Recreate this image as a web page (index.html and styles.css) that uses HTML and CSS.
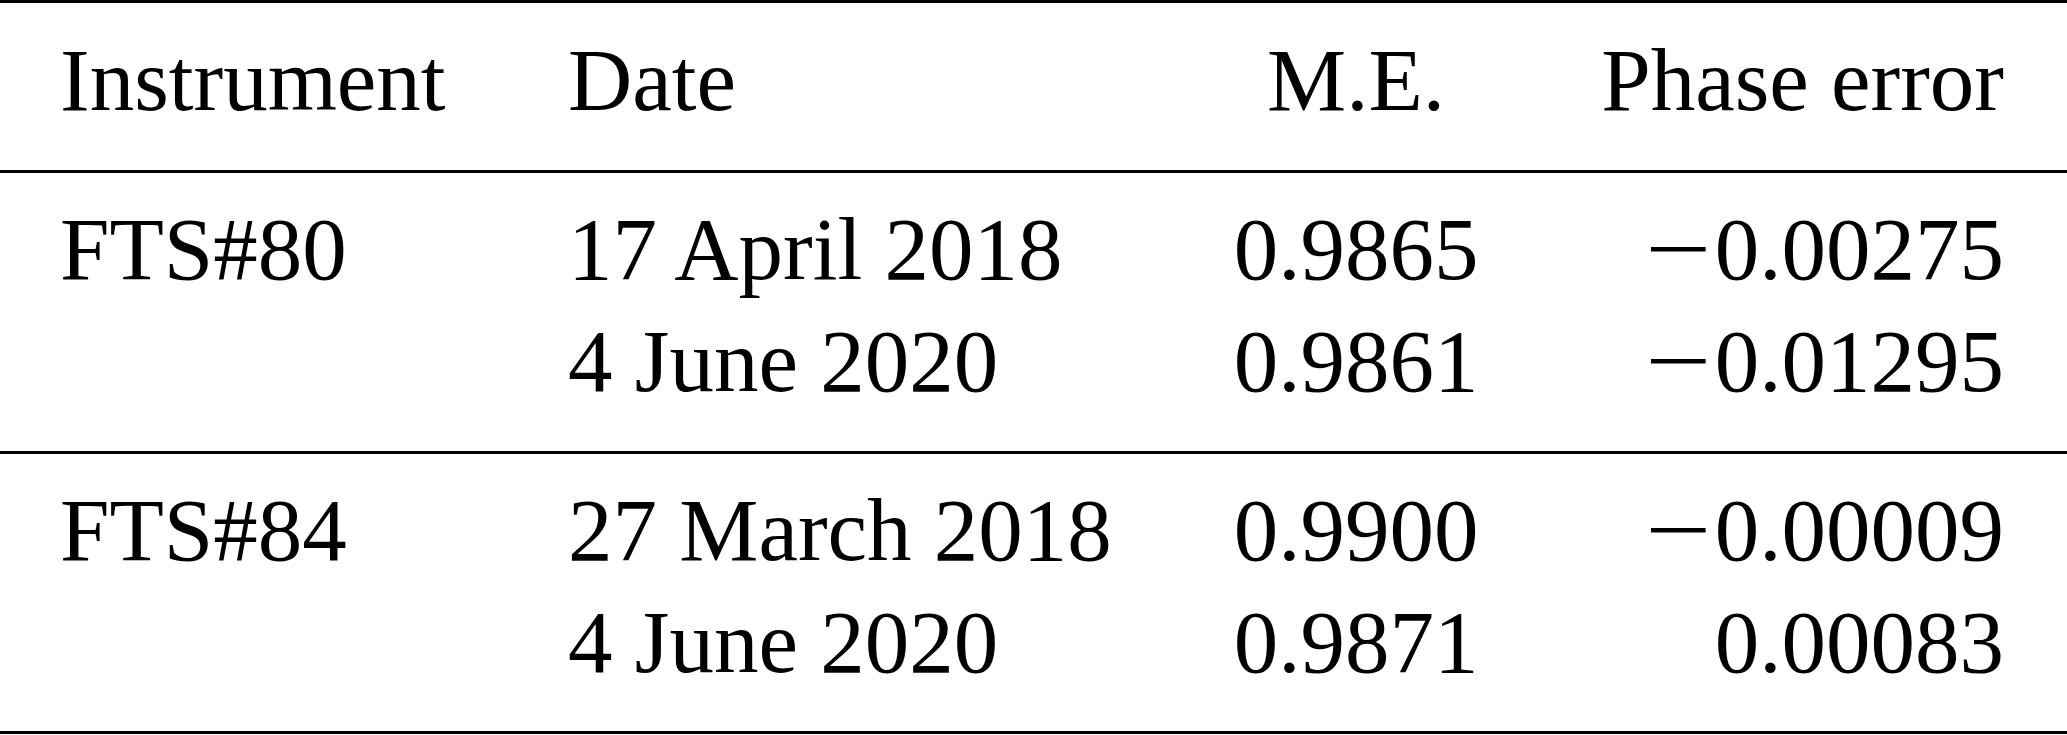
FILE: index.html
```html
<!DOCTYPE html>
<html>
<head>
<meta charset="utf-8">
<link rel="stylesheet" href="styles.css">
</head>
<body>
<table class="tbl">
  <colgroup>
    <col class="c1"><col class="c2"><col class="c3"><col class="c4">
  </colgroup>
  <thead>
    <tr>
      <th class="inst">Instrument</th>
      <th class="date">Date</th>
      <th class="me">M.E.</th>
      <th class="ph">Phase error</th>
    </tr>
  </thead>
  <tbody>
    <tr class="first">
      <td class="inst">FTS#80</td>
      <td class="date">17 April 2018</td>
      <td class="me">0.9865</td>
      <td class="ph"><span class="minus">−</span>0.00275</td>
    </tr>
    <tr class="last">
      <td class="inst"></td>
      <td class="date">4 June 2020</td>
      <td class="me">0.9861</td>
      <td class="ph"><span class="minus">−</span>0.01295</td>
    </tr>
  </tbody>
  <tbody>
    <tr class="first">
      <td class="inst">FTS#84</td>
      <td class="date">27 March 2018</td>
      <td class="me">0.9900</td>
      <td class="ph"><span class="minus">−</span>0.00009</td>
    </tr>
    <tr class="last end">
      <td class="inst"></td>
      <td class="date">4 June 2020</td>
      <td class="me">0.9871</td>
      <td class="ph">0.00083</td>
    </tr>
  </tbody>
</table>
</body>
</html>
```

FILE: styles.css
```css
html, body {
  margin: 0;
  padding: 0;
  background: #ffffff;
}

.tbl {
  width: 2067px;
  table-layout: fixed;
  border-collapse: separate;
  border-spacing: 0;
  font-family: "Liberation Serif", "Times New Roman", serif;
  font-size: 89px;
  line-height: 112px;
  color: #000;
}

.c1 { width: 568px; }
.c2 { width: 602px; }
.c3 { width: 372px; }
.c4 { width: 525px; }

.tbl th,
.tbl td {
  padding: 0;
  font-weight: normal;
  white-space: nowrap;
  vertical-align: baseline;
}

.tbl th {
  border-top: 3px solid #000;
  border-bottom: 3px solid #000;
  padding-top: 21px;
  padding-bottom: 34px;
}

.tbl tr.first td { padding-top: 20px; }
.tbl tr.last td {
  padding-bottom: 34px;
  border-bottom: 3px solid #000;
}
.tbl tr.end td { padding-bottom: 33px; }

.inst { text-align: left; padding-left: 60px !important; }
.date { text-align: left; }
.me { text-align: center; }
.ph { text-align: right; padding-right: 63px !important; }

.minus {
  display: inline-block;
  width: 70px;
  text-align: left;
  transform: scaleX(1.32);
  transform-origin: left center;
}
```
